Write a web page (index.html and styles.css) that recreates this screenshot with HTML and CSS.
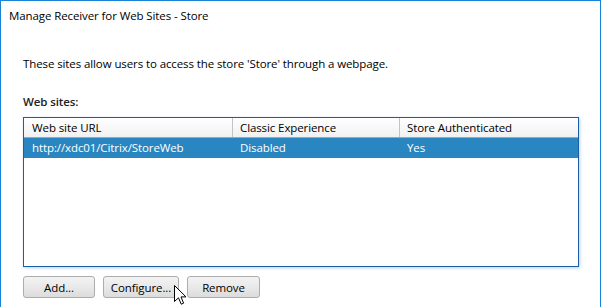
FILE: index.html
```html
<!DOCTYPE html>
<html>
<head>
    <title>Manage Receiver for Web Sites - Store</title>
    <meta charset="UTF-8">
    <link rel="stylesheet" href="styles.css">
</head>
<body>
    <div class="window">
        <div class="title">Manage Receiver for Web Sites - Store</div>
        <div class="content">
            <p class="intro">These sites allow users to access the store 'Store' through a webpage.</p>
            <div class="label">Web sites:</div>
            <div class="listbox">
                <div class="row header">
                    <div class="cell">Web site URL</div>
                    <div class="cell">Classic Experience</div>
                    <div class="cell">Store Authenticated</div>
                </div>
                <div class="row selected">
                    <div class="cell">http://xdc01/Citrix/StoreWeb</div>
                    <div class="cell">Disabled</div>
                    <div class="cell">Yes</div>
                </div>
            </div>
            <div class="buttons">
                <button class="btn add">Add...</button>
                <button class="btn configure">Configure...
                    <svg class="cursor" width="13" height="21" viewBox="0 0 13 21">
                        <path d="M0.5 0.5 L0.5 16.5 L4.5 12.8 L7.2 19.2 L9.6 18.2 L7 11.9 L12 11.9 Z" fill="#fff" stroke="#000" stroke-width="1" stroke-linejoin="miter"/>
                    </svg>
                </button>
                <button class="btn remove">Remove</button>
            </div>
        </div>
    </div>
</body>
</html>
```

FILE: styles.css
```css
body {
    margin: 0;
    background: #fff;
    font-family: "Open Sans", "Noto Sans", sans-serif;
    font-size: 11.5px;
    letter-spacing: -0.1px;
    color: #000;
}
.window {
    width: 601px;
    height: 307px;
    box-sizing: border-box;
    border: 1px solid #1883d7;
    border-bottom: none;
}
.title {
    height: 30px;
    line-height: 29px;
    padding-left: 8px;
}
.content {
    padding-left: 22px;
}
.intro {
    margin: 0;
    padding-top: 25px;
    line-height: 16px;
}
.label {
    margin-top: 22px;
    line-height: 16px;
    font-weight: 600;
    color: #222;
}
.listbox {
    margin-top: 7px;
    width: 556px;
    height: 150px;
    box-sizing: border-box;
    border: 1px solid #1b5ea6;
    box-shadow: 1px 1px 3px rgba(60, 130, 200, 0.35);
}
.row {
    display: grid;
    grid-template-columns: 209px 167px 1fr;
    height: 20px;
}
.cell {
    line-height: 19px;
    padding-left: 8px;
    white-space: nowrap;
}
.header {
    background: linear-gradient(#ffffff, #f1f1f1);
    border-bottom: 1px solid #a5a5a5;
    height: 19px;
    box-sizing: content-box;
}
.header .cell {
    border-right: 1px solid #c3c3c3;
}
.header .cell:last-child {
    border-right: none;
}
.header .cell + .cell,
.selected .cell + .cell {
    padding-left: 7px;
}
.selected {
    background: #2a86c0;
    color: #fff;
}
.buttons {
    display: flex;
    gap: 8px;
    margin-top: 9px;
}
.btn {
    position: relative;
    height: 22px;
    width: 72px;
    padding: 0;
    font-family: inherit;
    font-size: 11.5px;
    letter-spacing: -0.1px;
    color: #000;
    background: linear-gradient(#f3f3f3, #e9e9e9 50%, #dcdcdc);
    border: 1px solid #acacac;
    border-radius: 3px;
}
.configure {
    width: 76px;
}
.remove {
    width: 73px;
}
.cursor {
    position: absolute;
    left: 70px;
    top: 8px;
}
```
